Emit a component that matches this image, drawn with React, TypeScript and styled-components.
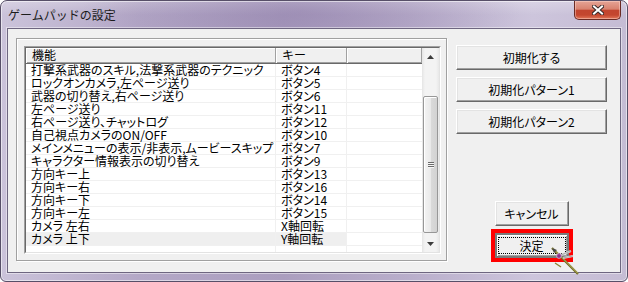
import React from 'react';
import styled, { createGlobalStyle, css } from 'styled-components';

const UI_FONT = `"Noto Sans CJK JP", "Noto Sans", sans-serif`;

const GlobalStyle = createGlobalStyle`
  html, body {
    margin: 0;
    padding: 0;
    background: #ffffff;
  }
  body {
    width: 628px;
    height: 282px;
    overflow: hidden;
    font-family: ${UI_FONT};
  }
`;

const BINDINGS = [
  { action: '打撃系武器のスキル,法撃系武器のテクニック', key: 'ボタン4' },
  { action: 'ロックオンカメラ,左ページ送り', key: 'ボタン5' },
  { action: '武器の切り替え,右ページ送り', key: 'ボタン6' },
  { action: '左ページ送り', key: 'ボタン11' },
  { action: '右ページ送り、チャットログ', key: 'ボタン12' },
  { action: '自己視点カメラのON/OFF', key: 'ボタン10' },
  { action: 'メインメニューの表示/非表示,ムービースキップ', key: 'ボタン7' },
  { action: 'キャラクター情報表示の切り替え', key: 'ボタン9' },
  { action: '方向キー上', key: 'ボタン13' },
  { action: '方向キー右', key: 'ボタン16' },
  { action: '方向キー下', key: 'ボタン14' },
  { action: '方向キー左', key: 'ボタン15' },
  { action: 'カメラ 左右', key: 'X軸回転' },
  { action: 'カメラ 上下', key: 'Y軸回転' },
];

const SELECTED_ROW = 13;

const COLUMNS = [250, 71, 75];

const Window = styled.div`
  position: relative;
  box-sizing: border-box;
  width: 628px;
  height: 282px;
  display: flex;
  flex-direction: column;
  padding: 0 6px 8px;
  border: 1px solid #574f68;
  border-radius: 7px 7px 6px 6px;
  overflow: hidden;
  background:
    radial-gradient(ellipse 220px 60px at 300px 10px, rgba(140, 122, 168, 0.45), transparent),
    linear-gradient(180deg, rgba(255, 255, 255, 0.25) 0px, rgba(255, 255, 255, 0) 14px),
    linear-gradient(90deg, #cbc3da 0%, #b4a8c7 22%, #ab9ebf 45%, #b9aecb 65%, #cdc5dc 85%, #c5bcd4 100%);
  box-shadow: inset 0 0 0 1px rgba(255, 255, 255, 0.55);
`;

const TitleBar = styled.div`
  height: 27px;
  display: flex;
  align-items: flex-start;
  justify-content: space-between;
`;

const Title = styled.div`
  margin: 8px 0 0 1px;
  font-size: 12px;
  line-height: 12px;
  color: #1c1c1c;
`;

const CloseButton = styled.div`
  box-sizing: border-box;
  width: 47px;
  height: 19px;
  display: flex;
  align-items: center;
  justify-content: center;
  border: 1px solid #6a2b24;
  border-top: none;
  border-radius: 0 0 5px 5px;
  background: linear-gradient(180deg, #e5a496 0%, #d8826f 45%, #c2452f 52%, #c4472f 78%, #e2775a 100%);
  box-shadow: inset 0 0 0 1px rgba(255, 220, 210, 0.45);
`;

const Client = styled.div`
  flex: 1;
  display: flex;
  align-items: stretch;
  padding: 9px 13px 10px 8px;
  background: #f0f0f0;
  border: 1px solid #6e6680;
  box-shadow: 0 0 0 1px rgba(255, 255, 255, 0.45);
`;

const Panel = styled.div`
  box-sizing: border-box;
  width: 431px;
  height: 223px;
  padding: 7px;
  border: 1px solid #a0a0a0;
  box-shadow: inset 1px 1px 0 #ffffff, 1px 1px 0 #ffffff;
`;

const ListView = styled.div`
  box-sizing: border-box;
  width: 417px;
  height: 208px;
  border: 1px solid;
  border-color: #a0a0a0 #ffffff #ffffff #a0a0a0;
`;

const ListInner = styled.div`
  box-sizing: border-box;
  height: 100%;
  display: flex;
  background: #ffffff;
  border: 1px solid;
  border-color: #696969 #e3e3e3 #e3e3e3 #696969;
`;

const Table = styled.div`
  flex: 1;
  display: flex;
  flex-direction: column;
  overflow: hidden;
`;

const HeaderRow = styled.div`
  display: flex;
  flex: none;
  height: 16px;
  border-bottom: 1px solid #696969;
  box-sizing: border-box;
`;

const HeaderCell = styled.div<{ $width: number }>`
  box-sizing: border-box;
  width: ${p => p.$width}px;
  height: 15px;
  padding: 1px 0 0 6px;
  background: #f0f0f0;
  border-right: 1px solid #a0a0a0;
  box-shadow: inset 1px 1px 0 #ffffff, inset 0 -1px 0 #a0a0a0;
  font-size: 12px;
  line-height: 12px;
  color: #000;
  white-space: nowrap;
`;

const Row = styled.div`
  display: flex;
  flex: none;
  height: 13px;
  box-sizing: border-box;
  border-bottom: 1px solid #f0f0f0;
`;

const Cell = styled.div<{ $width: number; $selected?: boolean; $last?: boolean }>`
  box-sizing: border-box;
  width: ${p => p.$width}px;
  height: 12px;
  padding-left: 5px;
  border-right: ${p => (p.$last ? 'none' : '1px solid #f0f0f0')};
  background: ${p => (p.$selected ? '#efefef' : 'transparent')};
  font-size: 12px;
  line-height: 12px;
  font-feature-settings: 'palt';
  color: #000;
  white-space: nowrap;
`;

const ScrollBar = styled.div`
  width: 17px;
  display: flex;
  flex-direction: column;
  background: linear-gradient(90deg, #e5e5e5 0%, #f3f3f3 18%, #f3f3f3 82%, #e8e8e8 100%);
`;

const ArrowButton = styled.div`
  height: 17px;
  display: flex;
  align-items: center;
  justify-content: center;
`;

const Track = styled.div`
  flex: 1;
  padding: 31px 1px 0;
`;

const Thumb = styled.div`
  box-sizing: border-box;
  height: 137px;
  display: flex;
  align-items: center;
  justify-content: center;
  border: 1px solid #979797;
  border-radius: 2px;
  background: linear-gradient(90deg, #f4f4f4 0%, #e9e9e9 50%, #dadada 51%, #d2d2d2 100%);
  box-shadow: inset 1px 1px 0 #ffffff;
`;

const Grip = styled.div`
  width: 6px;
  height: 6px;
  background: repeating-linear-gradient(180deg, #6a6a6a 0 1px, #f6f6f6 1px 2px);
`;

const Side = styled.div`
  width: 151px;
  margin-left: 9px;
  padding: 7px 0 4px;
  display: flex;
  flex-direction: column;
  justify-content: space-between;
  align-items: center;
`;

const ButtonGroup = styled.div`
  display: flex;
  flex-direction: column;
  align-items: center;
  gap: 7px;
`;

const ActionButton = styled.button<{ $width: number; $default?: boolean; $marked?: boolean }>`
  position: relative;
  box-sizing: border-box;
  width: ${p => p.$width}px;
  height: 25px;
  margin: 0;
  padding: 0;
  font-family: ${UI_FONT};
  font-size: 12px;
  line-height: 12px;
  font-feature-settings: 'palt';
  color: #000;
  background: #f0f0f0;
  border: 1px solid;
  border-color: #ffffff #696969 #696969 #ffffff;
  box-shadow: inset -1px -1px 0 #a0a0a0, inset 1px 1px 0 #e3e3e3;

  ${p => p.$default && css`
    border: 2px solid #7a7a7a;
    box-shadow: inset 1px 1px 0 #ffffff, inset -1px -1px 0 #a0a0a0;

    &::after {
      content: '';
      position: absolute;
      inset: 2px 1px;
      border: 1px dotted #000;
    }
  `}

  ${p => p.$marked && css`
    outline: 4px solid #ff0000;
    outline-offset: 0;
  `}
`;

const Cursor = styled.svg`
  position: absolute;
  left: 545px;
  top: 242px;
  pointer-events: none;
`;

const UpArrow = () => (
  <svg width="7" height="4" viewBox="0 0 7 4">
    <polygon points="3.5,0 7,4 0,4" fill="#3c3c3c" />
  </svg>
);

const DownArrow = () => (
  <svg width="7" height="4" viewBox="0 0 7 4">
    <polygon points="0,0 7,0 3.5,4" fill="#3c3c3c" />
  </svg>
);

const CloseGlyph = () => (
  <svg width="12" height="10" viewBox="0 0 12 10">
    <path d="M2 1.5 L10 8.5 M10 1.5 L2 8.5" stroke="#3a2a2a" strokeWidth="4" strokeLinecap="square" />
    <path d="M2 1.5 L10 8.5 M10 1.5 L2 8.5" stroke="#ffffff" strokeWidth="2" strokeLinecap="square" />
  </svg>
);

const App: React.FC = () => {
  return (
    <>
      <GlobalStyle />
      <Window>
        <TitleBar>
          <Title>ゲームパッドの設定</Title>
          <CloseButton>
            <CloseGlyph />
          </CloseButton>
        </TitleBar>

        <Client>
          <Panel>
            <ListView>
              <ListInner>
                <Table>
                  <HeaderRow>
                    <HeaderCell $width={COLUMNS[0]}>機能</HeaderCell>
                    <HeaderCell $width={COLUMNS[1]}>キー</HeaderCell>
                    <HeaderCell $width={COLUMNS[2]} />
                  </HeaderRow>
                  {BINDINGS.map((item, index) => (
                    <Row key={index}>
                      <Cell $width={COLUMNS[0]} $selected={index === SELECTED_ROW}>{item.action}</Cell>
                      <Cell $width={COLUMNS[1]} $selected={index === SELECTED_ROW}>{item.key}</Cell>
                      <Cell $width={COLUMNS[2]} $last />
                    </Row>
                  ))}
                  <Row>
                    <Cell $width={COLUMNS[0]} />
                    <Cell $width={COLUMNS[1]} />
                    <Cell $width={COLUMNS[2]} $last />
                  </Row>
                </Table>
                <ScrollBar>
                  <ArrowButton>
                    <UpArrow />
                  </ArrowButton>
                  <Track>
                    <Thumb>
                      <Grip />
                    </Thumb>
                  </Track>
                  <ArrowButton>
                    <DownArrow />
                  </ArrowButton>
                </ScrollBar>
              </ListInner>
            </ListView>
          </Panel>

          <Side>
            <ButtonGroup>
              <ActionButton $width={151}>初期化する</ActionButton>
              <ActionButton $width={151}>初期化パターン1</ActionButton>
              <ActionButton $width={151}>初期化パターン2</ActionButton>
            </ButtonGroup>
            <ButtonGroup>
              <ActionButton $width={74}>キャンセル</ActionButton>
              <ActionButton $width={74} $default $marked>決定</ActionButton>
            </ButtonGroup>
          </Side>
        </Client>

        <Cursor width="40" height="40" viewBox="0 0 40 40">
          <path d="M6 5 L32 31" stroke="#6f6a22" strokeWidth="2.2" />
          <path d="M6.5 5 L32 30.5" stroke="#d2cc78" strokeWidth="0.8" />
          <polygon points="6,5 11,7 8,10" fill="#4a4a4a" />
          <path d="M15 12 L25 8 M17 15 L27 13" stroke="#d8d8d8" strokeWidth="2" />
          <path d="M15 12 L25 8 M17 15 L27 13" stroke="#8c8c8c" strokeWidth="0.6" />
          <circle cx="13" cy="13" r="2.4" fill="#8b2f8c" stroke="#d7b4d8" strokeWidth="0.8" />
          <path d="M9 20 L15 24" stroke="#8a8430" strokeWidth="1.4" />
        </Cursor>
      </Window>
    </>
  );
};

export default App;
